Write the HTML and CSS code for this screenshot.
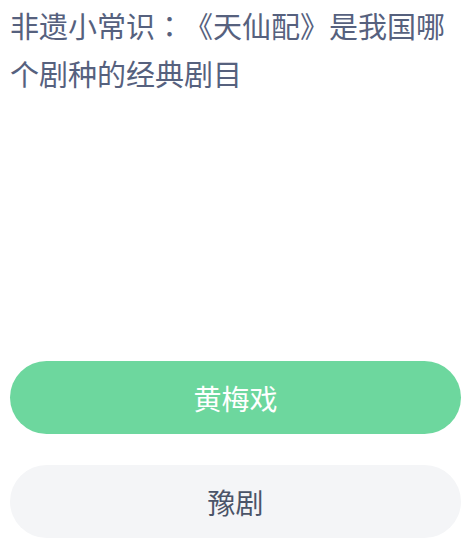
FILE: index.html
```html
<!DOCTYPE html>
<html lang="zh">
<head>
<meta charset="utf-8">
<link rel="stylesheet" href="styles.css">
</head>
<body>
<div class="page">
  <div class="question">非遗小常识<span class="colon" lang="ja">：</span>《天仙配》是我国哪个剧种的经典剧目</div>
  <div class="options">
    <div class="option correct">黄梅戏</div>
    <div class="option">豫剧</div>
  </div>
</div>
</body>
</html>
```

FILE: styles.css
```css
html, body {
  margin: 0;
  padding: 0;
  background: #ffffff;
}
.page {
  width: 465px;
  height: 544px;
  box-sizing: border-box;
  padding: 1px 4px 0 10px;
  display: flex;
  flex-direction: column;
  font-family: "Noto Sans CJK SC", "Noto Sans", sans-serif;
  text-spacing-trim: space-all;
}
.question {
  font-size: 29px;
  line-height: 48px;
  color: #56617e;
  height: 275px;
  margin-bottom: 85px;
  text-spacing-trim: space-all;
}
.colon {
  font-family: "Noto Sans CJK JP", "Noto Sans CJK SC", sans-serif;
}
.options {
  display: flex;
  flex-direction: column;
  gap: 31px;
}
.option {
  height: 73px;
  border-radius: 37px;
  background: #f4f5f7;
  color: #4b5468;
  font-size: 28px;
  display: flex;
  align-items: center;
  justify-content: center;
}
.option.correct {
  background: #6dd79e;
  color: #ffffff;
}
```
